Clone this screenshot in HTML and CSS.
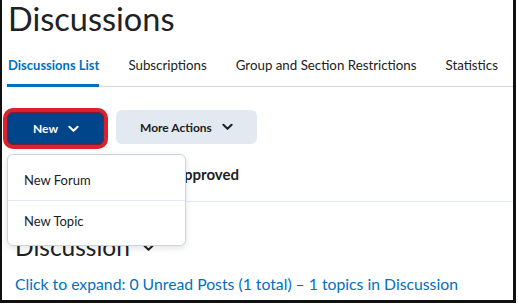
FILE: index.html
```html
<!DOCTYPE html>
<html lang="en">
<head>
<meta charset="UTF-8" />
<title>Discussions</title>
<link rel="stylesheet" href="styles.css">
</head>
<body>
<div class="frame">
  <h1 class="title">Discussions</h1>

  <nav class="tabs">
    <a href="#" class="tab active">Discussions List</a>
    <a href="#" class="tab">Subscriptions</a>
    <a href="#" class="tab">Group and Section Restrictions</a>
    <a href="#" class="tab">Statistics</a>
  </nav>

  <div class="toolbar">
    <div class="new-wrap">
      <button class="btn btn-primary">New
        <svg class="chev" viewBox="0 0 12 8"><polyline points="1.5,1.5 6,6 10.5,1.5" /></svg>
      </button>
      <!-- open dropdown -->
      <div class="menu">
        <div class="menu-item">New Forum</div>
        <div class="menu-item">New Topic</div>
      </div>
    </div>
    <button class="btn btn-secondary">More Actions
      <svg class="chev" viewBox="0 0 12 8"><polyline points="1.5,1.5 6,6 10.5,1.5" /></svg>
    </button>
  </div>

  <div class="filter-row">
    <span class="filter">Unapproved</span>
  </div>

  <section class="forum">
    <h2 class="forum-title">Discussion
      <svg class="chev chev-lg" viewBox="0 0 12 8"><polyline points="1.5,1.5 6,6 10.5,1.5" /></svg>
    </h2>
    <a href="#" class="expand">Click to expand: 0 Unread Posts (1 total) – 1 topics in Discussion</a>
  </section>
</div>
</body>
</html>
```

FILE: styles.css
```css
* {
  margin: 0; padding: 0; box-sizing: border-box;
}
body {
  font-family: Lato, 'Noto Sans', sans-serif;
  background: #fff;
  color: #202122;
}
.frame {
  width: 516px;
  height: 303px;
  border-left: 2px solid #111;
  border-right: 3px solid #111;
  border-bottom: 3px solid #111;
  overflow: hidden;
  padding-left: 5px;
}
.title {
  font-size: 32.5px;
  font-weight: 400;
  line-height: 38px;
  margin-left: 1px;
  color: #202122;
}
/* Tabs */
.tabs {
  display: flex;
  align-items: flex-end;
  gap: 29px;
  margin-top: 14px;
  border-bottom: 1px solid #d3d9e3;
  white-space: nowrap;
}
.tab {
  font-size: 13.3px;
  line-height: 16px;
  color: #202122;
  text-decoration: none;
  padding: 5px 0 11px;
  border-bottom: 3px solid transparent;
  margin-bottom: -1px;
}
.tab.active {
  font-size: 13px;
  color: #006fbf;
  font-weight: 700;
  border-bottom-color: #006fbf;
  padding-left: 1px;
}
/* Toolbar */
.toolbar {
  display: flex;
  align-items: flex-start;
  gap: 8px;
  margin-top: 21px;
}
.new-wrap {
  position: relative;
}
.btn {
  font-family: Lato, sans-serif;
  font-size: 12px;
  font-weight: 700;
  border: none;
  display: flex;
  align-items: center;
  gap: 10px;
  border-radius: 6px;
  cursor: pointer;
  white-space: nowrap;
}
.btn-primary {
  background: #004489;
  color: #fff;
  height: 41px;
  width: 105px;
  padding-left: 26px;
  border: 4px solid #e01f2d;
  border-radius: 10px;
  margin-left: -4px;
  box-shadow: inset 0 0 0 1px #8a1a2a;
}
.btn-secondary {
  background: #e3e9f1;
  color: #202122;
  height: 34px;
  width: 141px;
  margin-top: 2px;
  padding-left: 24px;
}
.chev {
  width: 11px;
  height: 8px;
  fill: none;
  stroke: currentColor;
  stroke-width: 2.2;
  stroke-linecap: round;
  stroke-linejoin: round;
}
/* Dropdown menu */
.menu {
  position: absolute;
  top: 46px;
  left: 0;
  width: 179px;
  padding: 4px 0;
  background: #fff;
  border: 1px solid #cdd5dc;
  border-radius: 6px;
  box-shadow: 0 2px 6px rgba(0,0,0,0.12);
  z-index: 10;
}
.menu-item {
  font-size: 13px;
  color: #202122;
  height: 41px;
  padding-left: 16px;
  display: flex;
  align-items: center;
}
.menu-item + .menu-item {
  border-top: 1px solid #e3e9f1;
}
/* Filter row */
.filter-row {
  height: 53px;
  border-bottom: 1px solid #e3e9f1;
  padding: 15px 0 0 150px;
}
.filter {
  font-size: 15px;
  font-weight: 700;
  color: #202122;
}
/* Forum */
.forum {
  padding-left: 8px;
}
.forum-title {
  font-size: 24.5px;
  font-weight: 400;
  line-height: 34px;
  margin-top: 28px;
  display: flex;
  align-items: center;
  gap: 13px;
}
.chev-lg {
  width: 11px;
  height: 8px;
  margin-top: 2px;
}
.expand {
  display: block;
  margin-top: 10px;
  font-size: 15.75px;
  color: #006fbf;
  text-decoration: none;
  white-space: nowrap;
}
```
